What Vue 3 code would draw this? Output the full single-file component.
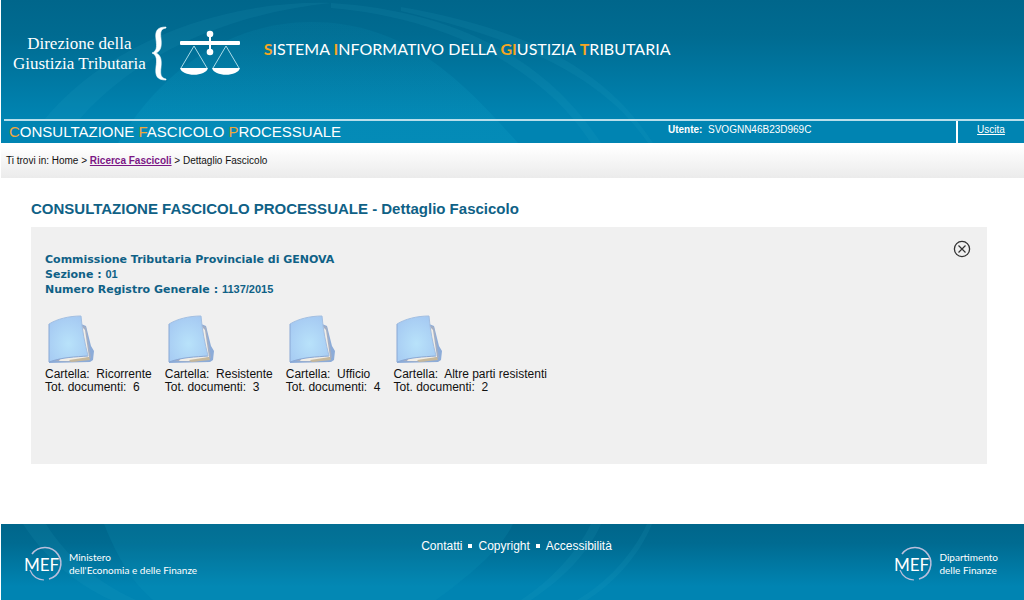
<script setup>
const folders = [
  { name: 'Ricorrente', total: 6 },
  { name: 'Resistente', total: 3 },
  { name: 'Ufficio', total: 4 },
  { name: 'Altre parti resistenti', total: 2 }
]
</script>

<template>
  <div class="page">
    <header class="header">
      <svg class="scene" viewBox="0 0 1024 143" preserveAspectRatio="xMinYMin slice" aria-hidden="true">
        <defs>
          <linearGradient id="glow" x1="0" y1="0" x2="0" y2="1">
            <stop offset="0" stop-color="#10a0c4" stop-opacity=".1" />
            <stop offset="1" stop-color="#12a4ca" stop-opacity=".22" />
          </linearGradient>
        </defs>
        <path d="M117 143C160 70 230 22 310 22C405 22 460 80 517 143Z" fill="url(#glow)" />
        <g fill="#35b2d0" fill-opacity=".1">
          <path d="M43 120C100 50 210 0 330 3C240 12 140 48 78 120Z" />
          <path d="M330 3C440 10 540 50 600 143H590C540 65 440 17 330 8Z" />
          <path d="M400 7C530 30 605 70 652 143H647C604 80 530 42 400 11Z" />
        </g>
      </svg>
      <div class="masthead">
        <div class="brand">Direzione della<br>Giustizia Tributaria</div>
        <svg class="emblem" width="92" height="56" viewBox="150 26 92 56" aria-hidden="true">
          <path d="M166 27C157 27 155 31 156 39C157 47 157 51 152 53C157 55 157 60 156 67C155 76 157 80 166 80V79C161 78 160 75 161 67C162 58 160 55 156 53C160 51 162 48 161 39C160 31 161 29 166 28Z" fill="#fff" stroke="#fff" stroke-width=".6" />
          <rect x="180" y="41" width="60" height="4" rx="1" fill="#fff" />
          <path d="M210 34V52" stroke="#fff" stroke-width="2" />
          <circle cx="210" cy="34" r="3.3" fill="#fff" />
          <circle cx="210" cy="52" r="3.3" fill="#fff" />
          <path d="M181 68L194 46L207 68M213 68L226 46L239 68" fill="none" stroke="#a9dcea" stroke-width="1" />
          <path d="M180 68H208C206 77 182 77 180 68ZM212 68H240C238 77 214 77 212 68Z" fill="#fff" />
        </svg>
        <div class="system"><b>S</b>ISTEMA <b>I</b>NFORMATIVO DELLA <b>GI</b>USTIZIA <b>T</b>RIBUTARIA</div>
      </div>
      <div class="bar">
        <div class="service"><i>C</i>ONSULTAZIONE <i>F</i>ASCICOLO <i>P</i>ROCESSUALE</div>
        <div class="user"><strong>Utente:</strong>&nbsp; SVOGNN46B23D969C</div>
        <div class="exit"><a href="#uscita">Uscita</a></div>
      </div>
    </header>

    <nav class="crumbs" aria-label="Percorso">Ti trovi in: Home &gt; <a href="#ricerca">Ricerca Fascicoli</a> &gt; Dettaglio Fascicolo</nav>

    <main class="main">
      <h1>CONSULTAZIONE FASCICOLO PROCESSUALE - Dettaglio Fascicolo</h1>
      <section class="panel">
        <button class="close" type="button" aria-label="Chiudi">
          <svg width="18" height="18" viewBox="0 0 18 18" fill="none" stroke="#333">
            <circle cx="9" cy="9" r="7.6" stroke-width="1.3" />
            <path d="M5.5 5.5L12.5 12.5M12.5 5.5L5.5 12.5" stroke-width="1.2" />
          </svg>
        </button>
        <div class="case">
          <div>Commissione Tributaria Provinciale di GENOVA</div>
          <div>Sezione : <span>01</span></div>
          <div>Numero Registro Generale : <span>1137/2015</span></div>
        </div>
        <ul class="folders">
          <li v-for="f in folders" :key="f.name">
            <svg width="52" height="52" viewBox="0 0 52 52" aria-hidden="true">
              <defs>
                <radialGradient id="cover" cx=".5" cy=".6" r=".65">
                  <stop offset="0" stop-color="#b8e2fa" />
                  <stop offset="1" stop-color="#a5c9f2" />
                </radialGradient>
              </defs>
              <path d="M4 48L36 10L41 12L46 32L49 37L48 46L45 48L4 49Z" fill="#8dacd8" />
              <path d="M36 11L41 13L46 44L30 48L10 47Z" fill="#a4afc4" />
              <path d="M36 12L40 16L44 43L30 47L14 47Z" fill="#f1ede6" />
              <path d="M24 46L44 43L45 46L26 48Z" fill="#c6b89c" />
              <path d="M4 10C12 5 24 2 36 2C37 16 40 30 43 42C30 43 18 43 4 48Z" fill="url(#cover)" />
              <path d="M4 10V48C18 43 30 43 43 42" fill="none" stroke="#8aa8d4" stroke-width="1" />
              <path d="M4 10C12 5 24 2 36 2C37 16 40 30 43 42" fill="none" stroke="#a3bfe2" stroke-width="1" />
            </svg>
            <div>Cartella:&nbsp; {{ f.name }}</div>
            <div>Tot. documenti:&nbsp; {{ f.total }}</div>
          </li>
        </ul>
      </section>
    </main>

    <footer class="footer">
      <svg class="scene" viewBox="0 0 1024 76" preserveAspectRatio="xMinYMin slice" aria-hidden="true">
        <path d="M103 0C115 30 130 58 152 76H435C470 50 500 25 512 0Z" fill="#12a0c5" fill-opacity=".15" />
        <g fill="#35b2d0" fill-opacity=".1">
          <path d="M22 0C45 35 75 60 110 76H135C95 58 65 32 45 0Z" />
          <path d="M590 0C575 30 548 58 520 76H530C562 55 588 28 600 0Z" />
          <path d="M646 0C632 30 605 60 576 76H586C615 58 640 28 651 0Z" />
        </g>
      </svg>
      <div class="mef">
        <svg width="42" height="36" viewBox="0 0 42 36" role="img" aria-label="MEF">
          <g fill="none" stroke="#b9bfdc" stroke-width="1.6">
            <path d="M9 8A16 16 0 1 1 26 33" />
            <path d="M7 24A16 16 0 0 0 21 34" stroke-width="1.2" />
          </g>
          <text x="1" y="25" class="monogram">MEF</text>
        </svg>
        <div>Ministero<br>dell'Economia e delle Finanze</div>
      </div>
      <nav class="links" aria-label="Informazioni"><a href="#contatti">Contatti</a><i></i><a href="#copyright">Copyright</a><i></i><a href="#accessibilita">Accessibilità</a></nav>
      <div class="mef right">
        <svg width="42" height="36" viewBox="0 0 42 36" role="img" aria-label="MEF">
          <g fill="none" stroke="#b9bfdc" stroke-width="1.6">
            <path d="M9 8A16 16 0 1 1 26 33" />
            <path d="M7 24A16 16 0 0 0 21 34" stroke-width="1.2" />
          </g>
          <text x="1" y="25" class="monogram">MEF</text>
        </svg>
        <div>Dipartimento<br>delle Finanze</div>
      </div>
    </footer>
  </div>
</template>

<style>
body { background: #fff; }
</style>

<style scoped>
.page {
  display: flex;
  flex-direction: column;
  min-height: 100vh;
  padding-left: 1px;
  box-sizing: border-box;
  font-family: "Liberation Sans", Arial, sans-serif;
  color: #111;
}
.header, .footer {
  position: relative;
  background: linear-gradient(#00668b, #006b91 25%, #0084b2 82%, #0084b2);
  color: #fff;
}
.scene { position: absolute; inset: 0; width: 100%; height: 100%; }
.masthead {
  position: relative;
  display: flex;
  align-items: flex-start;
  height: 93px;
  padding: 26px 12px 0;
}
.brand {
  font: 17px/20px "Liberation Serif", serif;
  text-align: center;
  padding-top: 8px;
  white-space: nowrap;
}
.emblem { flex: none; margin-left: 4px; }
.system {
  font: 16px/22px Lato, sans-serif;
  margin: 12px 0 0 22px;
  white-space: nowrap;
}
.system b { color: #f5a623; font-weight: 700; }
.bar {
  position: relative;
  display: flex;
  margin-left: 3px;
  height: 22px;
  border-top: 2px solid #b8deeb;
}
.service { flex: 1; padding-left: 5px; font-size: 15px; line-height: 22px; }
.service i { color: #f0a83c; font-style: normal; }
.user { width: 288px; font-size: 10px; line-height: 18px; }
.exit {
  width: 68px;
  box-sizing: border-box;
  border-left: 2px solid #fff;
  font-size: 10px;
  line-height: 18px;
  text-align: center;
}
.exit a { color: #fff; }
.crumbs {
  height: 35px;
  padding-left: 5px;
  font-size: 10px;
  line-height: 36px;
  background: linear-gradient(#fff 10%, #ebebeb);
}
.crumbs a { color: #7b1685; font-weight: 700; }
.main { flex: 1; padding: 22px 37px 60px 30px; }
h1 { margin: 0 0 9px; color: #0f6186; font-size: 15px; line-height: 18px; }
.panel {
  position: relative;
  min-height: 212px;
  padding: 25px 14px 0;
  background: #f0f0f0;
}
.close {
  position: absolute;
  top: 13px;
  right: 16px;
  width: 18px;
  height: 18px;
  padding: 0;
  border: 0;
  background: none;
}
.close svg { display: block; }
.case {
  color: #0f6186;
  font: bold 11px/15px "DejaVu Sans", Verdana, sans-serif;
}
.case div { height: 15px; }
.case span { font-family: "Liberation Sans", Arial, sans-serif; }
.folders {
  display: flex;
  gap: 13px;
  margin: 17px 0 0;
  padding: 0;
  list-style: none;
  font-size: 12px;
  line-height: 13px;
}
.folders svg { display: block; margin-bottom: 2px; }
.footer {
  display: flex;
  justify-content: space-between;
  height: 76px;
  box-sizing: border-box;
  padding: 0 26px 0 22px;
}
.mef, .links { position: relative; }
.mef {
  display: flex;
  flex: 1;
  gap: 4px;
  padding-top: 22px;
  font: 10px/13px Lato, sans-serif;
}
.mef div { padding-top: 5px; }
.right { justify-content: flex-end; }
.monogram { font: 17px Lato, sans-serif; fill: #fff; }
.links {
  display: flex;
  align-items: center;
  gap: 6px;
  height: 44px;
  padding-left: 12px;
  font-size: 12px;
}
.links a { color: #fff; text-decoration: none; }
.links i { width: 4px; height: 4px; background: #fff; }
</style>
